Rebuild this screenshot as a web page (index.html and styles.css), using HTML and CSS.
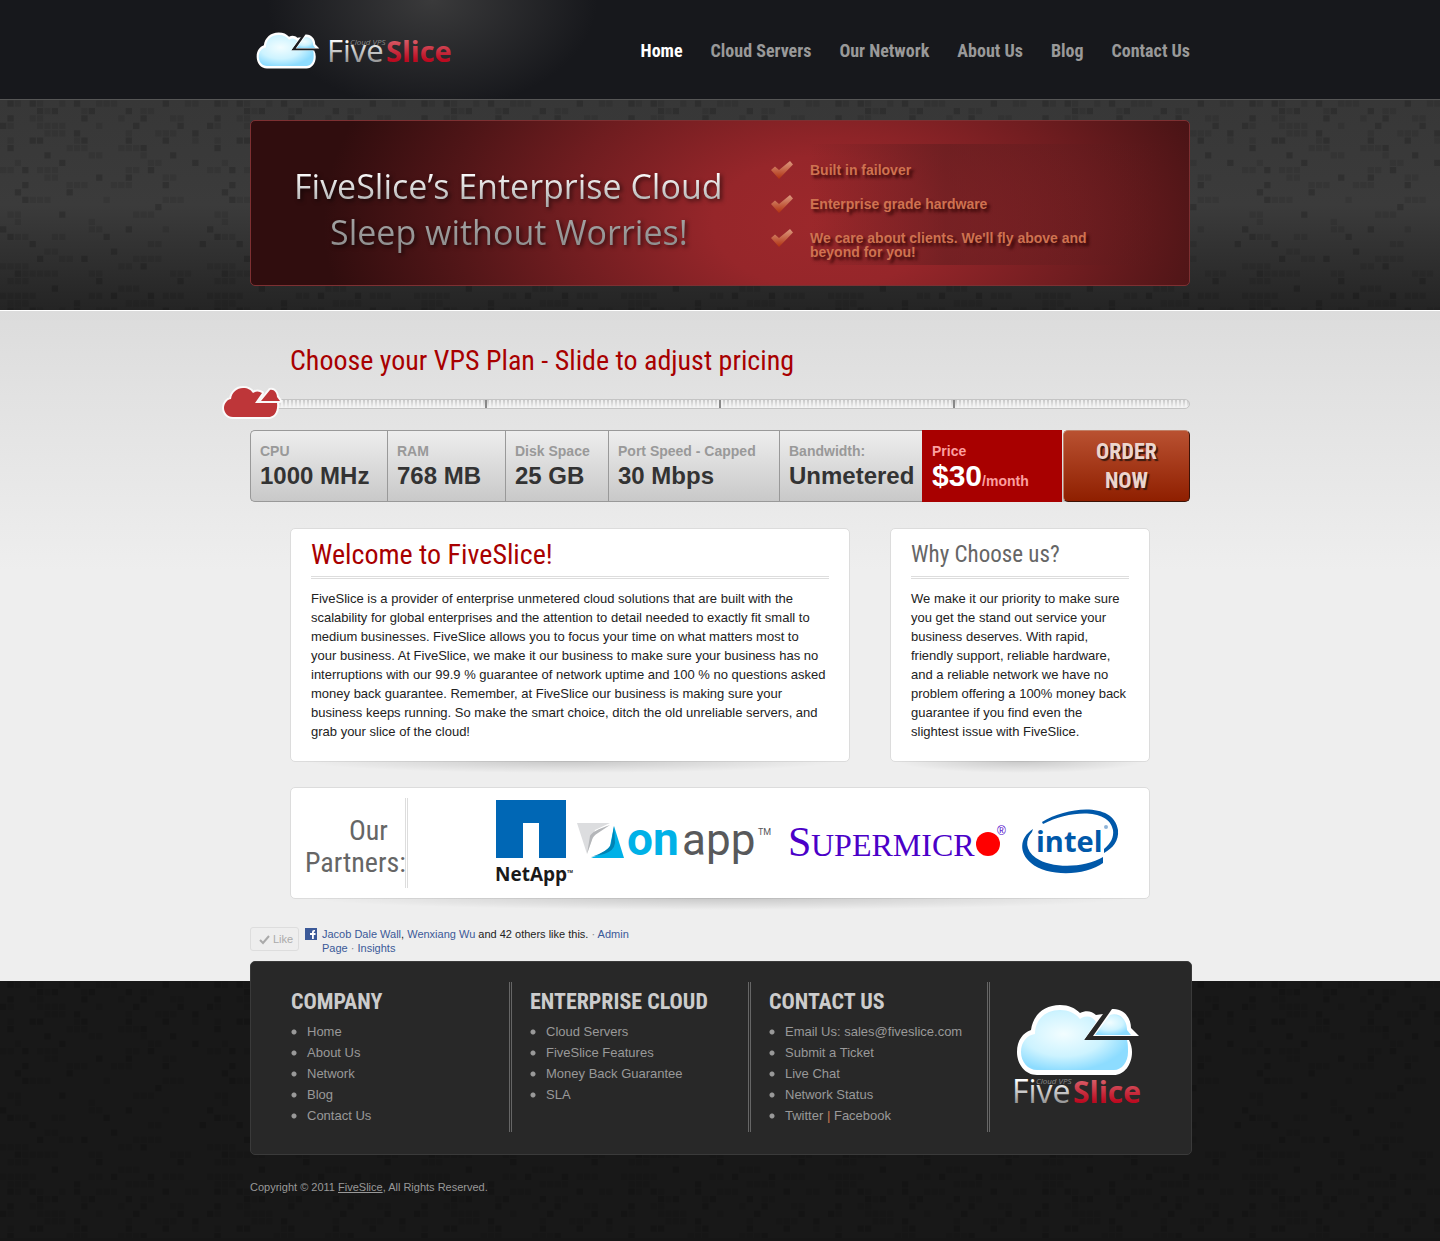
FILE: index.html
```html
<!DOCTYPE html>
<html lang="en">
<head>
<meta charset="utf-8">
<meta name="viewport" content="width=device-width, initial-scale=1">
<title>FiveSlice Cloud VPS</title>
<link rel="stylesheet" href="styles.css">
</head>
<body>
<svg class="defs" width="0" height="0" aria-hidden="true">
  <defs>
    <radialGradient id="sky" cx="0.4" cy="0.4" r="0.62">
      <stop offset="0" stop-color="#f2fdff"/>
      <stop offset="0.6" stop-color="#cdf3ff"/>
      <stop offset="1" stop-color="#8ddcff"/>
    </radialGradient>
    <linearGradient id="silver" x1="0" y1="0" x2="0" y2="1">
      <stop offset="0.25" stop-color="#ffffff"/>
      <stop offset="0.85" stop-color="#8a8a8a"/>
    </linearGradient>
    <linearGradient id="crimson" x1="0" y1="0" x2="0" y2="1">
      <stop offset="0.2" stop-color="#d9606a"/>
      <stop offset="0.75" stop-color="#bd0a20"/>
    </linearGradient>
    <linearGradient id="copper" x1="0" y1="0" x2="0" y2="1">
      <stop offset="0" stop-color="#dc9a80"/>
      <stop offset="1" stop-color="#b03010"/>
    </linearGradient>
    <symbol id="cloud" viewBox="0 0 124 72">
      <path fill="#fff" d="M21 71C9 71 1 60 1 48C1 36 7 29 15 26C17 11 28 1 44 1C53 1 59 4 64 9C70 6 76 7 80 11L87 10L68 36H113C115 40 116 44 116 48C116 61 108 71 98 71Z"/>
      <path fill="url(#sky)" d="M21 66C12 66 5 58 5 48C5 38 11 31 19 30C19 15 30 6 44 6C53 6 60 10 64 15C70 11 76 12 80 18L68 36H111C112 40 112 44 112 48C112 58 106 66 98 66Z"/>
      <path fill="#fff" d="M96 5C107 4 115 13 115 24L123 32H77Z"/>
      <path fill="url(#sky)" d="M94 11C104 8 111 16 111 26L115 31H79Z"/>
    </symbol>
    <symbol id="check" viewBox="0 0 22 18">
      <path fill="url(#copper)" d="M0 9L4 5.500L8 9L19 0L22 3.500L8 18Z"/>
    </symbol>
  </defs>
</svg>

<header class="top">
  <div class="wrap top-row">
    <a class="brand" href="#" aria-label="FiveSlice Cloud VPS">
      <svg width="200" height="44" viewBox="0 0 200 44">
        <use href="#cloud" x="0" y="4" width="64" height="37"/>
        <text class="logo-thin" x="71" y="34" font-size="31" fill="url(#silver)">Five</text>
        <text class="logo-bold" x="130" y="34" font-size="29" fill="url(#crimson)">Slice</text>
        <text class="logo-tag" x="94" y="17" font-size="8">Cloud VPS</text>
      </svg>
    </a>
    <nav class="nav">
      <a class="current" href="#">Home</a>
      <a href="#">Cloud Servers</a>
      <a href="#">Our Network</a>
      <a href="#">About Us</a>
      <a href="#">Blog</a>
      <a href="#">Contact Us</a>
    </nav>
  </div>
</header>

<section class="hero">
  <div class="wrap banner">
    <h1 class="slogan">
      <span class="slogan-main">FiveSlice’s Enterprise Cloud</span>
      <span class="slogan-sub">Sleep without Worries!</span>
    </h1>
    <ul class="perks">
      <li><svg width="22" height="18"><use href="#check"/></svg><span>Built in failover</span></li>
      <li><svg width="22" height="18"><use href="#check"/></svg><span>Enterprise grade hardware</span></li>
      <li><svg width="22" height="18"><use href="#check"/></svg><span>We care about clients. We'll fly above and beyond for you!</span></li>
    </ul>
  </div>
</section>

<main class="main">
  <div class="wrap">
    <h2 class="plan-title"><label for="plan">Choose your VPS Plan - Slide to adjust pricing</label></h2>
    <div class="track">
      <input class="slider" id="plan" type="range" min="0" max="4" value="0">
    </div>

    <div class="plan">
      <dl class="specs">
        <div><dt>CPU</dt><dd>1000 MHz</dd></div>
        <div><dt>RAM</dt><dd>768 MB</dd></div>
        <div><dt>Disk Space</dt><dd>25 GB</dd></div>
        <div><dt>Port Speed - Capped</dt><dd>30 Mbps</dd></div>
        <div><dt>Bandwidth:</dt><dd>Unmetered</dd></div>
        <div class="price"><dt>Price</dt><dd>$30<small>/month</small></dd></div>
      </dl>
      <button class="order" type="button">ORDER<br>NOW</button>
    </div>

    <div class="cards">
      <section class="card welcome">
        <h2>Welcome to FiveSlice!</h2>
        <p>FiveSlice is a provider of enterprise unmetered cloud solutions that are built with the scalability for global enterprises and the attention to detail needed to exactly fit small to medium businesses. FiveSlice allows you to focus your time on what matters most to your business. At FiveSlice, we make it our business to make sure your business has no interruptions with our 99.9 % guarantee of network uptime and 100 % no questions asked money back guarantee. Remember, at FiveSlice our business is making sure your business keeps running. So make the smart choice, ditch the old unreliable servers, and grab your slice of the cloud!</p>
      </section>
      <section class="card why">
        <h2>Why Choose us?</h2>
        <p>We make it our priority to make sure you get the stand out service your business deserves. With rapid, friendly support, reliable hardware, and a reliable network we have no problem offering a 100% money back guarantee if you find even the slightest issue with FiveSlice.</p>
      </section>
      <section class="card partners">
        <h2><span>Our</span> Partners:</h2>
        <div class="logos">
          <svg width="76" height="90" viewBox="0 0 76 90" role="img" aria-label="NetApp">
            <path fill="#0067b5" d="M0 2H70V60H43V25H27V60H0Z"/>
            <text class="netapp" x="-1" y="83" font-size="19">NetApp</text>
            <text class="netapp" x="71" y="75" font-size="4">TM</text>
          </svg>
          <svg width="208" height="90" viewBox="0 0 208 90" role="img" aria-label="onapp">
            <path fill="#dcdddf" d="M1 25H34L19 32L11 56Z"/>
            <path fill="#b4b6b9" d="M11 56L14 38Q16 33 34 27L22 35Q17 38 16 42Z"/>
            <path fill="#00b1e7" d="M38 28L48 60H15Q31 54 34 48Z"/>
            <path fill="#0083b4" d="M15 59Q33 53 35 46L38 28L39 45Q38 53 28 56Z"/>
            <text class="onapp-on" x="51" y="57" font-size="46">on</text>
            <text class="onapp-app" x="106" y="57" font-size="44">app</text>
            <text class="onapp-app" x="182" y="37" font-size="9">TM</text>
          </svg>
          <svg width="230" height="90" viewBox="0 0 230 90" role="img" aria-label="Supermicro">
            <text class="smc" x="0" y="58" font-size="42">S</text>
            <text class="smc" x="23" y="58" font-size="32">UPERMICR</text>
            <circle cx="200" cy="46" r="12" fill="#f00"/>
            <text class="smc-r" x="209" y="37" font-size="12">®</text>
          </svg>
          <svg width="98" height="90" viewBox="0 0 98 90" role="img" aria-label="intel">
            <path fill="#0058a9" d="M20 24C46 8 92 4 96 32C97 43 91 50 82 55V51C89 45 92 39 91 32C87 10 48 12 21 26Z"/>
            <path fill="#0058a9" d="M11 31C-3 40 -3 55 9 65C25 79 64 78 81 65V59C63 70 30 71 14 60C3 52 3 42 10 34Z"/>
            <text class="intel" x="14" y="54" font-size="29">intel</text>
            <circle cx="84" cy="29" r="2" fill="#8fb4d8"/>
          </svg>
        </div>
      </section>
    </div>

    <div class="social">
      <button class="like" type="button">
        <svg width="11" height="9" viewBox="0 0 11 9"><path fill="none" stroke="#aaa" stroke-width="2" d="M1 5L4 8L10 1"/></svg>Like
      </button>
      <svg class="fb" width="12" height="12" viewBox="0 0 12 12"><path fill="#3b5998" d="M0 0H12V12H0Z"/><path fill="#fff" d="M7 11V7H5V5H7V4Q7 1.500 10 2V3.500Q8.800 3.300 8.800 4.500V5H10.500V7H8.800V11Z"/></svg>
      <p><a href="#">Jacob Dale Wall</a>, <a href="#">Wenxiang Wu</a> and 42 others like this. <i>·</i> <a href="#">Admin Page</a> <i>·</i> <a href="#">Insights</a></p>
    </div>
  </div>
</main>

<footer class="foot">
  <div class="wrap">
    <div class="foot-box">
      <section>
        <h3>COMPANY</h3>
        <ul>
          <li><a href="#">Home</a></li>
          <li><a href="#">About Us</a></li>
          <li><a href="#">Network</a></li>
          <li><a href="#">Blog</a></li>
          <li><a href="#">Contact Us</a></li>
        </ul>
      </section>
      <section>
        <h3>ENTERPRISE CLOUD</h3>
        <ul>
          <li><a href="#">Cloud Servers</a></li>
          <li><a href="#">FiveSlice Features</a></li>
          <li><a href="#">Money Back Guarantee</a></li>
          <li><a href="#">SLA</a></li>
        </ul>
      </section>
      <section>
        <h3>CONTACT US</h3>
        <ul>
          <li>Email Us: <a href="#">sales@fiveslice.com</a></li>
          <li><a href="#">Submit a Ticket</a></li>
          <li><a href="#">Live Chat</a></li>
          <li><a href="#">Network Status</a></li>
          <li><a href="#">Twitter</a> <b>|</b> <a href="#">Facebook</a></li>
        </ul>
      </section>
      <a class="foot-logo" href="#" aria-label="FiveSlice Cloud VPS">
        <svg width="130" height="106" viewBox="0 0 130 106">
          <use href="#cloud" x="2" y="0" width="124" height="72"/>
          <text class="logo-thin" x="-2" y="99" font-size="32" fill="url(#silver)">Five</text>
          <text class="logo-bold" x="59" y="99" font-size="30" fill="url(#crimson)">Slice</text>
          <text class="logo-tag" x="22" y="80" font-size="8">Cloud VPS</text>
        </svg>
      </a>
    </div>
    <p class="copy">Copyright © 2011 <a href="#">FiveSlice</a>, All Rights Reserved.</p>
  </div>
</footer>
</body>
</html>
```
FILE: styles.css
```css
:root {
  --sans: "Liberation Sans", Arial, sans-serif;
  --narrow: "Roboto Condensed", "Open Sans Condensed", "DejaVu Sans Condensed", sans-serif;
  --human: "Open Sans", "Noto Sans", sans-serif;
  --red: #a80000;
  --mosaic: url("data:image/svg+xml,%3Csvg xmlns='http://www.w3.org/2000/svg' viewBox='0 0 28 28'%3E%3Cg stroke='%23000' stroke-width='.85' stroke-dasharray='.85 .15'%3E%3Cpath stroke-opacity='.17' d='M1 .5h.85M4 .5h.85M10 .5h.85M22 .5h.85M5 1.500h.85M7 1.500h.85M12 1.500h.85M17 1.500h.85M1 2.500h.85M11 2.500h.85M19 2.500h.85M0 3.500h.85M18 3.500h.85M24 3.500h.85M10 4.500h.85M26 4.500h.85M4 5.500h.85M5 5.500h.85M11 5.500h.85M17 5.500h.85M22 5.500h.85M1 6.500h.85M19 6.500h.85M6 7.500h.85M23 7.500h.85M8 8.500h.85M26 8.500h.85M3 9.500h.85M20 9.500h.85M13 10.500h.85M17 10.500h.85M3 11.500h.85M22 11.500h.85M2 12.500h.85M9 12.500h.85M3 13.500h.85M21 14.500h.85M8 15.500h.85M0 17.500h.85M17 17.500h.85M1 18.500h.85M14 18.500h.85M4 19.500h.85M27 19.500h.85M15 20.500h.85M5 21.500h.85M11 21.500h.85M19 22.500h.85M2 23.500h.85M13 24.500h.85M24 24.500h.85M7 25.500h.85M20 26.500h.85M15 26.500h.85M10 27.500h.85'/%3E%3Cpath stroke-opacity='.09' d='M2 .5h.85M5 .5h.85M8 .5h.85M13 .5h3M25 .5h2M6 1.500h.85M11 1.500h.85M19 1.500h2M4 2.500h2M16 2.500h.85M23 2.500h2M1 3.500h.85M5 3.500h4M13 3.500h.85M6 4.500h3M17 4.500h.85M21 4.500h3M1 5.500h.85M10 5.500h.85M26 5.500h.85M9 6.500h3M16 6.500h3M12 7.500h2M19 7.500h.85M2 8.500h.85M20 8.500h2M0 9.500h2M5 9.500h3M17 9.500h2M6 10.500h2M22 10.500h2M10 11.500h2M15 11.500h3M9 11.500h.85M4 13.500h3M14 13.500h.85M22 13.500h3M1 15.500h2M18 15.500h3M2 16.500h.85M12 16.500h.85M12 17.500h2M22 17.500h.85M2 18.500h2M7 18.500h2M20 19.500h2M6 20.500h2M18 21.500h4M8 21.500h2M16 22.500h2M0 22.500h4M23 23.500h3M3 23.500h5M12 23.500h2M1 24.500h3M16 25.500h3M0 26.500h5M12 26.500h2M22 26.500h3M1 27.500h3M17 27.500h4'/%3E%3C/g%3E%3C/svg%3E");
}

* { box-sizing: border-box; }

body {
  margin: 0;
  font: 13px/19px var(--sans);
  color: #222;
  background: #161616;
}

h1, h2, h3, p, ul, dl, dd { margin: 0; padding: 0; }
h1, h2, h3 { font-weight: 400; }
ul { list-style: none; }
a { color: inherit; text-decoration: none; }
button { cursor: pointer; }
svg { flex: none; overflow: visible; }
.defs { position: absolute; }
.wrap { max-width: 940px; margin: 0 auto; }

/* Header */
.top {
  background: radial-gradient(ellipse 165px 110px at calc(50% - 288px) 0, #3a3a3b, #17181c);
  border-bottom: 1px solid #555;
}
.top-row {
  display: flex;
  align-items: center;
  justify-content: space-between;
  min-height: 99px;
}
.brand { display: flex; margin-left: 6px; }
.logo-thin { font-family: var(--human); font-weight: 400; }
.logo-bold { font-family: var(--human); font-weight: 700; }
.logo-tag { font-family: var(--human); font-style: italic; fill: #888; }
.nav {
  display: flex;
  gap: 28px;
  padding-top: 2px;
  font: 700 18px/28px var(--narrow);
  color: #999;
}
.nav .current { color: #fff; }

/* Hero */
.hero {
  padding: 20px 0 24px;
  background: var(--mosaic) 0 0 / 207px, linear-gradient(#373737, #3b3b3b 50%, #242424);
  border-bottom: 1px solid #fff;
}
.banner {
  display: flex;
  min-height: 166px;
  border: 1px solid #7d3032;
  border-radius: 5px;
  background: radial-gradient(ellipse 500px 300px at 61% 62%, #9c282b, #96262a 22%, #701d20 52%, #4f1517 76%, #300d0e);
}
.slogan {
  flex: none;
  width: 518px;
  padding: 42px 0 0 43px;
  font: 400 34px/46px var(--human);
  filter: drop-shadow(2px 2px 2px rgba(0, 0, 0, 0.6));
}
.slogan span {
  display: block;
  white-space: nowrap;
  color: transparent;
  background-clip: text;
  -webkit-background-clip: text;
}
.slogan-main { background-image: linear-gradient(#fff 20%, #aaa 90%); }
.slogan-sub { margin-left: 36px; background-image: linear-gradient(#aaa, #888); }
.perks {
  flex: 1;
  display: flex;
  flex-direction: column;
  gap: 14px;
  margin: 23px 28px 20px 0;
  padding: 17px 0 4px 2px;
  background: linear-gradient(90deg, rgba(90, 28, 30, 0) 10%, rgba(90, 28, 30, 0.5) 45%, rgba(90, 28, 30, 0));
  font: 700 14px/14px var(--sans);
  color: #cf7250;
  text-shadow: 3px 3px 3px rgba(40, 0, 0, 0.8);
}
.perks li { display: flex; gap: 17px; min-height: 20px; }
.perks span { max-width: 300px; padding-top: 2px; }

/* Plan picker */
.main {
  padding: 32px 0 26px;
  background: linear-gradient(#dcdcdc, #eee 260px);
}
.plan-title {
  padding-left: 40px;
  font: 400 28px/36px var(--narrow);
  color: var(--red);
}
.track {
  height: 10px;
  margin-top: 20px;
  border: 1px solid #c4c4c4;
  border-radius: 5px;
  background:
    linear-gradient(#888, #888) 25% 0 / 2px 100% no-repeat,
    linear-gradient(#888, #888) 50% 0 / 2px 100% no-repeat,
    linear-gradient(#888, #888) 75% 0 / 2px 100% no-repeat,
    linear-gradient(rgba(255, 255, 255, 0), #f4f4f4),
    repeating-linear-gradient(90deg, #c8c8c8 0 2px, #eee 2px 4px);
}
.slider {
  display: block;
  appearance: none;
  -webkit-appearance: none;
  width: calc(100% + 58px);
  height: 34px;
  margin: -14px -29px 0;
  background: none;
}
.slider::-webkit-slider-thumb {
  -webkit-appearance: none;
  width: 60px;
  height: 34px;
  background: url("data:image/svg+xml,%3Csvg xmlns='http://www.w3.org/2000/svg' viewBox='-2 -2 60 34'%3E%3Cg fill='%23be3639' stroke='%23fafafa' stroke-width='4' stroke-linejoin='round' paint-order='stroke'%3E%3Cpath d='M9 29C3 29 0 24 0 20C0 15 4 11 7 11C8 4 13 0 19 0C24 0 27 2 29 5C32 3 35 3 38 5L31 15H53C54 24 50 29 44 29Z'/%3E%3Cpath d='M46 2C50 1 53 5 53 9L56 13H37Z'/%3E%3C/g%3E%3C/svg%3E") center / 100% 100% no-repeat;
}

.plan {
  display: grid;
  grid-template-columns: 812fr 128fr;
  margin-top: 21px;
  border-radius: 5px;
  background: linear-gradient(#eee, #c8c8c8);
}
.specs {
  display: grid;
  grid-template-columns: 137fr 118fr 103fr 171fr 143fr 140fr;
  font-weight: 700;
  color: #333;
}
.specs div {
  min-height: 72px;
  padding: 11px 0 0 9px;
  border: solid #999;
  border-width: 1px 0 1px 1px;
  white-space: nowrap;
}
.specs div:first-child { border-radius: 5px 0 0 5px; }
.specs dt { font-size: 14px; line-height: 18px; color: #999; }
.specs dd { font-size: 24px; line-height: 32px; }
.specs .price { background: var(--red); border-color: var(--red); color: #fff; }
.price dt, .price small { color: #fb9f9f; }
.specs .price dd { font-size: 30px; }
.price small { font-size: 14px; }
.order {
  margin-left: 1px;
  padding: 0;
  border: 1px solid #3c1206;
  border-top-color: #c08068;
  border-left-color: #c08068;
  border-radius: 5px;
  background: linear-gradient(#b95131, #8f1f00);
  font: 700 22px/29px var(--narrow);
  color: #ecd5cd;
  text-shadow: 2px 2px 1px #3a1a10;
}

/* Cards */
.cards {
  display: grid;
  grid-template-columns: 560fr 260fr;
  gap: 25px 40px;
  margin: 26px 40px 0;
}
.card {
  position: relative;
  border: 1px solid #dcdcdc;
  border-radius: 5px;
  background: #fff;
  padding: 8px 20px 20px;
}
.card::after {
  content: "";
  position: absolute;
  inset: 100% 0 auto;
  height: 16px;
  background: radial-gradient(ellipse 48% 12px at 50% 0, rgba(0, 0, 0, 0.16), rgba(0, 0, 0, 0));
}
.card h2 {
  font: 400 28px/36px var(--narrow);
  color: #666;
}
.welcome h2, .why h2 {
  height: 42px;
  margin-bottom: 10px;
  border-bottom: 3px double #ddd;
}
.welcome p { padding-right: 2px; }
.card.welcome h2 { color: var(--red); }
.card.why h2 { font-size: 23px; }
.partners {
  grid-column: 1 / -1;
  display: flex;
  justify-content: space-between;
  padding: 10px 29px 10px 14px;
}
.partners h2 {
  width: 103px;
  padding-top: 17px;
  border-right: 3px double #ddd;
  line-height: 32px;
}
.partners h2 span { display: block; padding-left: 44px; }
.logos { display: flex; gap: 4px; }
.netapp { font-family: "Open Sans", sans-serif; font-weight: 700; fill: #1a1a1a; }
.onapp-on { font-family: Roboto, sans-serif; font-weight: 700; fill: #00b1e7; }
.onapp-app { font-family: Roboto, sans-serif; fill: #58595b; }
.smc { font-family: "Liberation Serif", serif; fill: #4b00c8; }
.smc-r { font-family: var(--sans); fill: #4b00c8; }
.intel { font-family: "Open Sans", sans-serif; font-weight: 700; fill: #0058a9; }

/* Like row */
.social {
  display: flex;
  align-items: flex-start;
  margin-top: 28px;
  font-size: 11px;
  line-height: 14px;
}
.like {
  display: flex;
  align-items: center;
  gap: 3px;
  width: 49px;
  height: 24px;
  padding: 0 0 0 8px;
  border: 1px solid #ddd;
  border-radius: 3px;
  background: none;
  font: 11px/14px var(--sans);
  color: #aaa;
}
.fb { margin: 1px 5px 0 6px; }
.social p { max-width: 320px; }
.social a { color: #3b5998; }
.social i { color: #888; }

/* Footer */
.foot { background: var(--mosaic) 0 0 / 207px, #181818; padding-bottom: 43px; }
.foot-box {
  position: relative;
  top: -20px;
  display: grid;
  grid-template-columns: 221fr 221fr 221fr 183fr;
  gap: 18px;
  min-height: 194px;
  margin: 0 -2px 4px 0;
  padding: 20px 0 22px 40px;
  border: 1px solid #3a3a3a;
  border-radius: 5px;
  background: #282828;
  color: #999;
}
.foot-box section { border-right: 3px double #666; }
.foot-box h3 {
  padding-top: 5px;
  font: 700 22px/30px var(--narrow);
  color: #ccc;
  white-space: nowrap;
}
.foot-box ul { padding-top: 4px; line-height: 21px; }
.foot-box li {
  padding-left: 16px;
  background: radial-gradient(circle at 3px 11px, #999 2px, transparent 3px);
  white-space: nowrap;
}
.foot-box b { color: #c87850; font-weight: 400; }
.foot-logo { display: flex; padding: 22px 0 0 6px; }
.copy { font-size: 11px; line-height: 16px; color: #999; }
.copy a { text-decoration: underline; }
```
